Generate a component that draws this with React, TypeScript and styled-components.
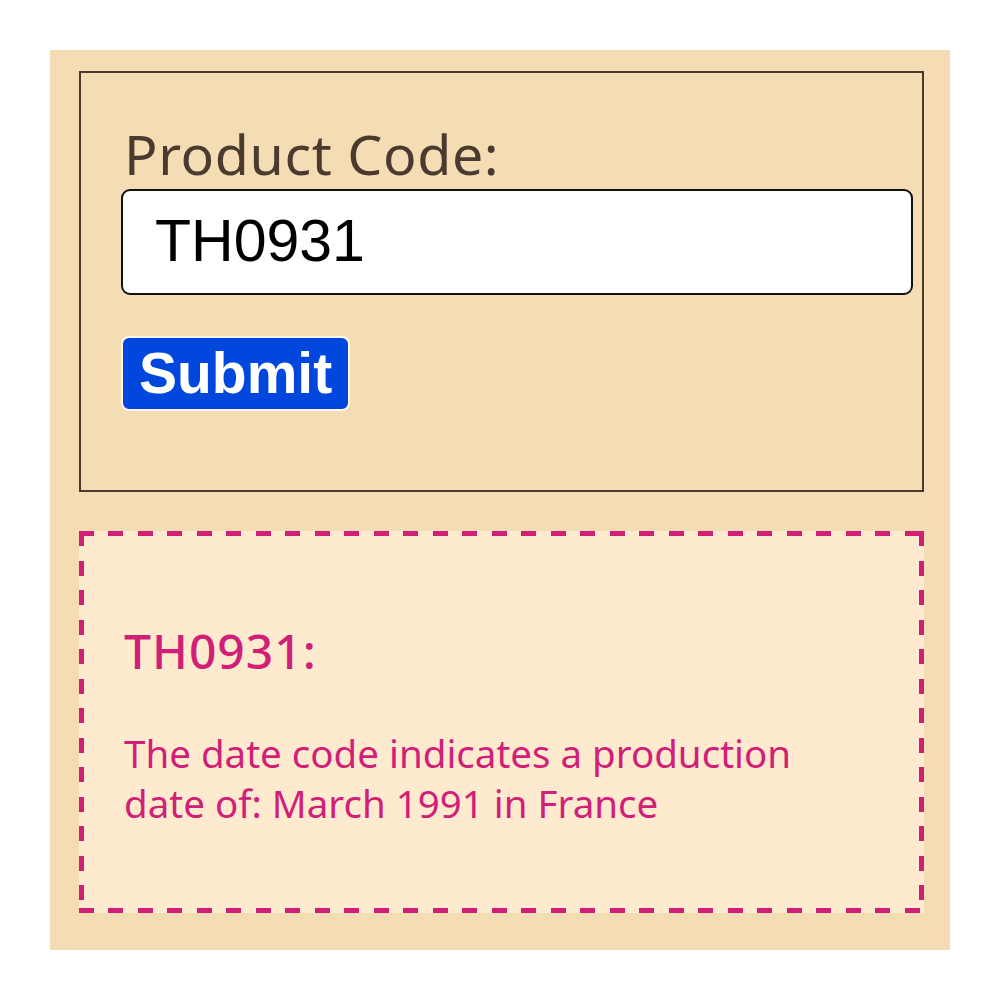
import React from "react";
import styled, { createGlobalStyle } from "styled-components";

const Global = createGlobalStyle`
  html, body { margin: 0; padding: 0; background: #ffffff; }
  body { font-family: "Noto Sans", sans-serif; }
`;

const Page = styled.div`
  width: 1000px;
  height: 1000px;
  padding: 50px;
  box-sizing: border-box;
`;

const Panel = styled.div`
  width: 900px;
  height: 900px;
  background: #f4dcb4;
  box-sizing: border-box;
  padding: 21px 26px 37px 29px;
  display: flex;
  flex-direction: column;
  gap: 39px;
`;

const Form = styled.form`
  height: 421px;
  box-sizing: border-box;
  border: 2px solid #4a3a2e;
  padding: 46px 9px 0 40px;
  display: flex;
  flex-direction: column;
  align-items: flex-start;
`;

const Label = styled.label`
  font-family: "Noto Sans", sans-serif;
  font-size: 55.5px;
  line-height: 70px;
  letter-spacing: 0.6px;
  color: #4b3b2f;
  padding-left: 3px;
`;

const Input = styled.input`
  width: 792px;
  height: 106px;
  box-sizing: border-box;
  border: 2px solid #111;
  border-radius: 9px;
  background: #fff;
  padding: 0 32px 3px;
  font-family: "Liberation Sans", Arial, sans-serif;
  font-size: 59px;
  color: #000;
  outline: none;
`;

const Button = styled.button`
  margin-top: 41px;
  height: 75px;
  padding: 0 16px;
  background: #0147de;
  color: #fff;
  border: 2px solid #fff6e6;
  border-radius: 8px;
  font-family: "Liberation Sans", Arial, sans-serif;
  font-weight: bold;
  font-size: 57px;
  line-height: 1;
`;

const pink = "#d11f78";

const Result = styled.div`
  flex: 1;
  box-sizing: border-box;
  background-color: #fdeacf;
  background-image:
    repeating-linear-gradient(90deg, ${pink} 0 15px, transparent 15px 29.5px),
    repeating-linear-gradient(90deg, ${pink} 0 15px, transparent 15px 29.5px),
    repeating-linear-gradient(180deg, ${pink} 0 15px, transparent 15px 29.5px),
    repeating-linear-gradient(180deg, ${pink} 0 15px, transparent 15px 29.5px);
  background-size: 100% 5px, 100% 5px, 5px 100%, 5px 100%;
  background-position: left top, left bottom, left top, right top;
  background-repeat: no-repeat;
  padding: 88px 45px 0 45px;
  color: ${pink};
  font-family: "Noto Sans", sans-serif;
`;

const Code = styled.div`
  font-size: 48px;
  line-height: 64px;
  font-weight: 500;
  letter-spacing: 1px;
`;

const Text = styled.p`
  margin: 45px 0 0;
  font-size: 38.5px;
  line-height: 50px;
  max-width: 700px;
`;

export default function App() {
  return (
    <>
      <Global />
      <Page>
        <Panel>
          <Form onSubmit={(e) => e.preventDefault()}>
            <Label htmlFor="code">Product Code:</Label>
            <Input id="code" defaultValue="TH0931" />
            <Button type="submit">Submit</Button>
          </Form>
          <Result>
            <Code>TH0931:</Code>
            <Text>The date code indicates a production date of: March 1991 in France</Text>
          </Result>
        </Panel>
      </Page>
    </>
  );
}
